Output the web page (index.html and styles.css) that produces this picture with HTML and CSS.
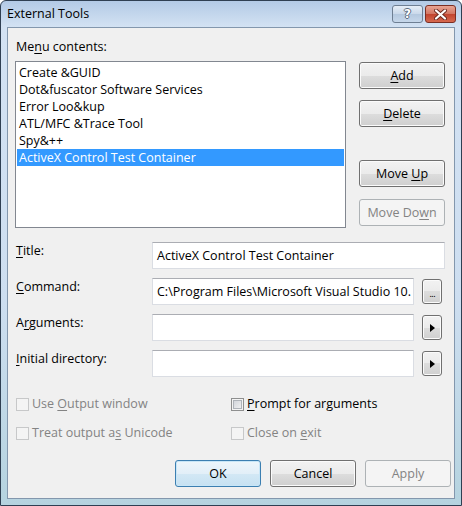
FILE: index.html
```html
<!DOCTYPE html>
<html lang="en">
<head>
  <meta charset="UTF-8">
  <title>External Tools</title>
  <link rel="stylesheet" href="styles.css">
</head>
<body>
  <div class="window">
    <div class="titlebar">
      <span class="caption">External Tools</span>
      <div class="caption-buttons">
        <span class="cap-btn help">?</span>
        <span class="cap-btn close">
          <svg width="13" height="11" viewBox="0 0 13 11">
            <path d="M2 1.5 L11 9.5 M11 1.5 L2 9.5" stroke="#6b2a20" stroke-width="4" stroke-linecap="round"/>
            <path d="M2 1.5 L11 9.5 M11 1.5 L2 9.5" stroke="#ffffff" stroke-width="2.2" stroke-linecap="round"/>
          </svg>
        </span>
      </div>
    </div>

    <div class="client">
      <div class="menu-label">Me<u>n</u>u contents:</div>
      <div class="top">
        <div class="list">
          <div class="item">Create &amp;GUID</div>
          <div class="item">Dot&amp;fuscator Software Services</div>
          <div class="item">Error Loo&amp;kup</div>
          <div class="item">ATL/MFC &amp;Trace Tool</div>
          <div class="item">Spy&amp;++</div>
          <div class="item selected">ActiveX Control Test Container</div>
        </div>
        <div class="side-buttons">
          <button class="btn btn-add"><u>A</u>dd</button>
          <button class="btn btn-delete"><u>D</u>elete</button>
          <button class="btn btn-up">Move <u>U</u>p</button>
          <button class="btn btn-down" disabled>Move Do<u>w</u>n</button>
        </div>
      </div>

      <div class="fields">
        <div class="field-row">
          <label class="field-label"><u>T</u>itle:</label>
          <div class="textbox wide">ActiveX Control Test Container</div>
        </div>
        <div class="field-row">
          <label class="field-label"><u>C</u>ommand:</label>
          <div class="textbox">C:\Program Files\Microsoft Visual Studio 10.</div>
          <button class="small-btn dots">...</button>
        </div>
        <div class="field-row">
          <label class="field-label">A<u>r</u>guments:</label>
          <div class="textbox"></div>
          <button class="small-btn"><span class="arrow"></span></button>
        </div>
        <div class="field-row">
          <label class="field-label"><u>I</u>nitial directory:</label>
          <div class="textbox"></div>
          <button class="small-btn"><span class="arrow"></span></button>
        </div>
      </div>

      <div class="options">
        <div class="check disabled"><span class="box"></span><span>Use <u>O</u>utput window</span></div>
        <div class="check"><span class="box"></span><span><u>P</u>rompt for arguments</span></div>
        <div class="check disabled"><span class="box"></span><span>Treat output a<u>s</u> Unicode</span></div>
        <div class="check disabled"><span class="box"></span><span>Close on <u>e</u>xit</span></div>
      </div>

      <div class="footer">
        <button class="btn default">OK</button>
        <button class="btn">Cancel</button>
        <button class="btn" disabled>Apply</button>
      </div>
    </div>
  </div>
</body>
</html>
```

FILE: styles.css
```css
body {
  margin: 0;
  font-family: "Segoe UI", "Open Sans", sans-serif;
  font-size: 12.5px;
  color: #000;
}

u {
  text-decoration-thickness: 1px;
  text-underline-offset: 2px;
}

.window {
  width: 462px;
  height: 506px;
  box-sizing: border-box;
  border: 1px solid #2f3f52;
  border-radius: 6px 6px 0 0;
  padding: 0 6px 6px;
  display: flex;
  flex-direction: column;
  background: linear-gradient(#b3cae6 0, #d3e2f3 26px, #cddef0 60%, #b5d3df 100%);
}

.titlebar {
  height: 26px;
  display: flex;
  align-items: flex-start;
  justify-content: space-between;
}

.caption {
  padding: 4px 0 0 0;
  font-size: 12.5px;
  color: #000;
}

.caption-buttons {
  display: flex;
  gap: 2px;
  padding-top: 4px;
  margin-right: -1px;
}

.cap-btn {
  width: 29px;
  height: 16px;
  border: 1px solid #6e7f93;
  border-radius: 3px;
  display: flex;
  align-items: center;
  justify-content: center;
}

.help {
  background: linear-gradient(#e6eef7, #c9d8ea 50%, #b4c8df 50%, #c6d7ea);
  color: #fff;
  font-family: "DejaVu Sans", sans-serif;
  font-weight: bold;
  font-size: 12px;
  text-shadow: -1px 0 #5b6b7e, 1px 0 #5b6b7e, 0 -1px #5b6b7e, 0 1px #5b6b7e;
}

.close {
  border-color: #7b2e23;
  background: linear-gradient(#e8a493, #d27562 50%, #c1432e 50%, #d6694f);
}

.client {
  flex: 1;
  background: #f0f0f0;
  border: 1px solid #8397ad;
  padding: 11px 3px 0 7px;
}

.menu-label {
  line-height: 16px;
  padding-left: 1px;
  margin-bottom: 6px;
}

.top {
  display: flex;
  gap: 13px;
}

.list {
  width: 331px;
  height: 167px;
  box-sizing: border-box;
  border: 1px solid #828790;
  background: #fff;
  padding: 2px 1px;
}

.item {
  height: 17px;
  line-height: 17px;
  padding-left: 2px;
  white-space: nowrap;
}

.item.selected {
  background: #3399ff;
  color: #fff;
}

.side-buttons {
  display: flex;
  flex-direction: column;
  padding-top: 1px;
}

.btn {
  width: 86px;
  height: 27px;
  box-sizing: border-box;
  font: inherit;
  color: #000;
  border: 1px solid #707070;
  border-radius: 3px;
  background: linear-gradient(#f2f2f2 0%, #ebebeb 50%, #dddddd 50%, #cfcfcf 100%);
  box-shadow: inset 0 0 0 1px #fbfbfb;
  padding: 0;
}

.btn:disabled {
  border-color: #adb2b5;
  background: #f4f4f4;
  box-shadow: none;
  color: #838383;
}

.btn.default {
  border-color: #3c7fb1;
  background: linear-gradient(#eef6fb 0%, #e2eff8 50%, #d3e8f5 50%, #c6e1f2 100%);
  box-shadow: inset 0 0 0 1px #c8e6f7;
}

.btn-delete {
  margin-top: 11px;
}

.btn-up {
  margin-top: 33px;
}

.btn-down {
  margin-top: 12px;
}

.fields {
  margin-top: 14px;
  width: 430px;
  display: flex;
  flex-direction: column;
  gap: 9px;
}

.field-row {
  display: flex;
  align-items: center;
  height: 27px;
}

.field-label {
  width: 136px;
  padding-left: 1px;
  align-self: flex-start;
  line-height: 16px;
  padding-top: 1px;
}

.textbox {
  width: 262px;
  height: 27px;
  box-sizing: border-box;
  border: 1px solid #dadde3;
  border-top-color: #abadb3;
  background: #fff;
  line-height: 25px;
  padding-left: 4px;
  white-space: nowrap;
  overflow: hidden;
}

.textbox.wide {
  width: 293px;
}

.small-btn {
  width: 20px;
  height: 25px;
  margin-left: 8px;
  box-sizing: border-box;
  border: 1px solid #707070;
  border-radius: 3px;
  background: linear-gradient(#f2f2f2 0%, #ebebeb 50%, #dddddd 50%, #cfcfcf 100%);
  box-shadow: inset 0 0 0 1px #fbfbfb;
  padding: 0;
  display: flex;
  align-items: center;
  justify-content: center;
}

.dots {
  font: 9px "DejaVu Sans", sans-serif;
  letter-spacing: -1px;
  padding-top: 4px;
}

.arrow {
  width: 0;
  height: 0;
  border-left: 5px solid #000;
  border-top: 4px solid transparent;
  border-bottom: 4px solid transparent;
  margin-left: 1px;
}

.options {
  margin-top: 19px;
  display: grid;
  grid-template-columns: 215px 1fr;
  row-gap: 13px;
  padding-left: 1px;
}

.check {
  display: flex;
  align-items: center;
  line-height: 16px;
  gap: 3px;
}

.check.disabled {
  color: #838383;
}

.box {
  width: 13px;
  height: 13px;
  box-sizing: border-box;
  border: 1px solid #8e8f8f;
  background: linear-gradient(135deg, #cbcfd5, #f6f6f6);
  box-shadow: inset 0 0 0 1px #f4f4f4, inset 0 0 0 2px #aeb3b9;
}

.check.disabled .box {
  border-color: #c7c8c9;
  background: #f4f4f4;
  box-shadow: none;
}

.footer {
  margin-top: 19px;
  display: flex;
  justify-content: flex-end;
  gap: 9px;
}
```
